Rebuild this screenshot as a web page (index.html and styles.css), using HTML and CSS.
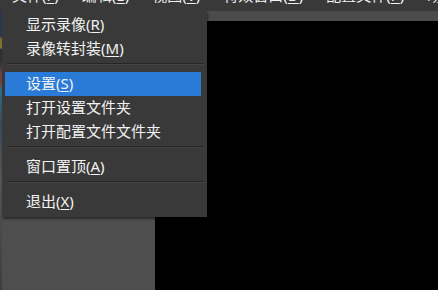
FILE: index.html
```html
<!DOCTYPE html>
<html lang="zh-CN">
<head>
<meta charset="utf-8">
<link rel="stylesheet" href="styles.css">
</head>
<body>
<div class="app">
  <div class="menubar">
    <span class="mb-item">文件(<u>F</u>)</span>
    <span class="mb-item">编辑(<u>E</u>)</span>
    <span class="mb-item">视图(<u>V</u>)</span>
    <span class="mb-item">特效窗口(<u>D</u>)</span>
    <span class="mb-item">配置文件(<u>P</u>)</span>
    <span class="mb-item">场景(<u>S</u>)</span>
  </div>
  <div class="main">
    <div class="left-pane">
      <div class="edge"></div>
      <div class="dock"></div>
    </div>
    <div class="right-pane">
      <div class="toolstrip"></div>
      <div class="preview"></div>
    </div>
  </div>
  <div class="menu">
    <div class="item">显示录像(<u>R</u>)</div>
    <div class="item">录像转封装(<u>M</u>)</div>
    <div class="sep"></div>
    <div class="item active">设置(<u>S</u>)</div>
    <div class="item">打开设置文件夹</div>
    <div class="item">打开配置文件文件夹</div>
    <div class="sep"></div>
    <div class="item">窗口置顶(<u>A</u>)</div>
    <div class="sep"></div>
    <div class="item">退出(<u>X</u>)</div>
  </div>
</div>
</body>
</html>
```

FILE: styles.css
```css
* { box-sizing: border-box; }
html, body { margin: 0; padding: 0; background: #000; }
body {
  font-family: "Noto Sans", "Noto Sans CJK SC", sans-serif;
  font-size: 15px;
  color: #f2f2f2;
}
u { text-decoration-thickness: 1px; text-underline-offset: 2px; }
.app {
  position: relative;
  width: 438px;
  height: 290px;
  overflow: hidden;
  display: flex;
  flex-direction: column;
}
.menubar {
  height: 11px;
  flex: none;
  background: #393939;
  display: flex;
  gap: 23px;
  padding-left: 12px;
  overflow: hidden;
  white-space: nowrap;
}
.mb-item {
  line-height: 20px;
  margin-top: -15px;
  height: 20px;
}
.main {
  flex: 1;
  display: flex;
}
.left-pane {
  width: 155px;
  display: flex;
}
.edge {
  width: 2px;
  background: linear-gradient(to bottom, #2c3650 0%, #2c3650 9%, #7c6f2a 10%, #8a7a2e 13%, #2a2a33 14%, #3a3a3a 20%, #704444 22%, #704444 26%, #2f6f86 28%, #3a4a5a 40%, #555 60%, #3c3c44 100%);
}
.dock {
  flex: 1;
  background: #4e4e4e;
}
.right-pane {
  flex: 1;
  display: flex;
  flex-direction: column;
}
.toolstrip {
  height: 10px;
  background: #4b4b4b;
}
.preview {
  flex: 1;
  background: #000;
}
.menu {
  position: absolute;
  left: 2px;
  top: 11px;
  width: 205px;
  height: 206px;
  background: #393939;
  padding: 2px 6px 3px 3px;
  box-shadow: 1px 2px 2px rgba(0,0,0,0.45);
}
.item {
  height: 24px;
  line-height: 22px;
  padding-left: 21px;
  white-space: nowrap;
}
.item.active {
  background: #2a7bd8;
}
.sep {
  height: 11px;
  padding: 2px 0 0 2px;
  margin-right: -3px;
}
.sep::before {
  content: "";
  display: block;
  height: 1px;
  background: #262626;
  border-bottom: 1px solid #444;
  box-sizing: content-box;
}
```
